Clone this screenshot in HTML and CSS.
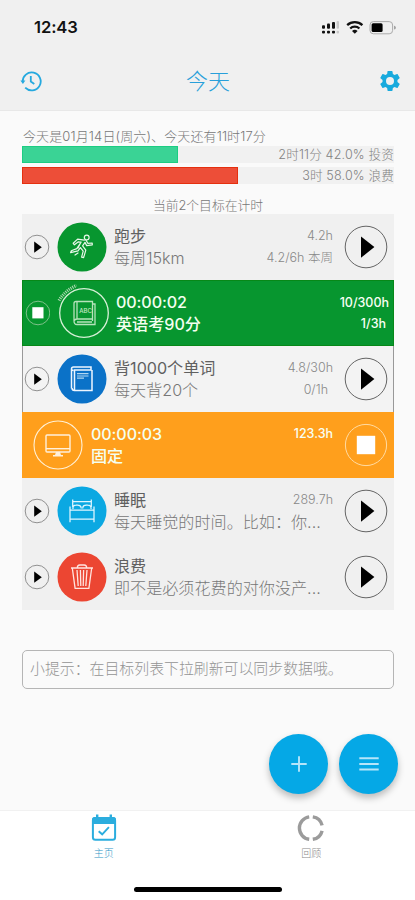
FILE: index.html
```html
<!DOCTYPE html>
<html lang="zh-CN">
<head>
<meta charset="utf-8">
<title>今天</title>
<link rel="stylesheet" href="styles.css">
</head>
<body>
<svg class="defs" width="0" height="0">
  <symbol id="play-small" viewBox="0 0 26 26"><circle cx="13" cy="13" r="11.8" fill="none" stroke="#777" stroke-width=".8"/><path d="M10.2 7.6v11.2l7.6-5.6z"/></symbol>
  <symbol id="play" viewBox="0 0 44 44"><circle cx="22" cy="22" r="20.8" fill="none" stroke="#555" stroke-width=".9"/><path d="M17 11.4v21.4L30.4 22z"/></symbol>
</svg>
<div class="screen">
  <header class="top">
    <div class="status">
      <span class="clock">12:43</span>
      <svg class="sysicons" width="76" height="18" viewBox="0 0 76 18">
        <g fill="#111"><rect x="1" y="7.2" width="3" height="3.6" rx="1"/><rect x="6" y="5.6" width="3" height="5.2" rx="1"/><rect x="11" y="4" width="3" height="6.8" rx="1"/><rect x="1" y="12.8" width="3" height="2.8" rx="1"/><rect x="6" y="12.8" width="3" height="2.8" rx="1"/><rect x="11" y="12.8" width="3" height="2.8" rx="1"/></g>
        <g fill="#c8c8c8"><rect x="15.6" y="3" width="2.4" height="7.8" rx="1"/><rect x="15.6" y="12.8" width="2.4" height="2.8" rx="1"/></g>
        <path d="M26.2 7.2a11.1 11.1 0 0 1 15.2 0M29.2 10.5a6.8 6.8 0 0 1 9.2 0" fill="none" stroke="#111" stroke-width="2.3"/><path d="M31 12.9a4.2 4.2 0 0 1 5.6 0l-2.8 2.9z" fill="#111"/>
        <rect x="49" y="3.6" width="22.6" height="12.2" rx="3.4" fill="none" stroke="#aaa" stroke-width="1"/><path d="M73.1 7.7c2.3.4 2.3 3.4 0 3.9z" fill="#999"/><rect x="50.6" y="5.3" width="11" height="8.8" rx="1.5"/>
      </svg>
    </div>
    <div class="titlebar">
      <svg width="22" height="22" viewBox="0 0 22 22" fill="none" stroke="#25a9df" stroke-width="1.8"><path d="M2.7 12A9 9 0 1 1 5.2 17.7"/><path d="M10.8 6v5.6l3.5 2.3"/><path d="M.4 10.6h5L2.9 14z" fill="#25a9df" stroke="none"/></svg>
      <h1>今天</h1>
      <svg width="24" height="24" viewBox="0 0 24 24" fill="#18aadd"><path d="M19.43 12.98c.04-.32.07-.64.07-.98s-.03-.66-.07-.98l2.11-1.65c.19-.15.24-.42.12-.64l-2-3.46c-.12-.22-.39-.3-.61-.22l-2.49 1c-.52-.4-1.08-.73-1.69-.98l-.38-2.65A.49.49 0 0 0 14 2h-4c-.25 0-.46.18-.49.42l-.38 2.65c-.61.25-1.17.59-1.69.98l-2.49-1c-.23-.09-.49 0-.61.22l-2 3.46c-.13.22-.07.49.12.64l2.11 1.65c-.04.32-.07.65-.07.98s.03.66.07.98l-2.11 1.65c-.19.15-.24.42-.12.64l2 3.46c.12.22.39.3.61.22l2.49-1c.52.4 1.08.73 1.69.98l.38 2.65c.03.24.24.42.49.42h4c.25 0 .46-.18.49-.42l.38-2.65c.61-.25 1.17-.59 1.69-.98l2.49 1c.23.09.49 0 .61-.22l2-3.46c.12-.22.07-.49-.12-.64zM12 16a4 4 0 1 1 0-8 4 4 0 0 1 0 8z"/></svg>
    </div>
  </header>

  <main>
    <p class="date">今天是01月14日(周六)、今天还有11时17分</p>
    <div class="bar"><div class="fill invest" style="width:42%"></div><span>2时11分 42.0% 投资</span></div>
    <div class="bar"><div class="fill waste" style="width:58%"></div><span>3时 58.0% 浪费</span></div>
    <p class="count">当前2个目标在计时</p>

    <section class="goals">
      <div class="row">
        <svg class="mini" viewBox="0 0 26 26"><use href="#play-small"/></svg>
        <svg class="icon" viewBox="0 0 50 50"><circle cx="25" cy="25" r="24.5" fill="#07962f"/><g fill="none" stroke="#e9f7e9" stroke-width="1.2" stroke-linejoin="round" stroke-linecap="round"><circle cx="29.7" cy="15.6" r="2.4"/><path d="M27.3 18.2l-6.7-1.1-4.4 4.2 1.2 1.5 4-3 2.6.6-4.2 6.2-5.5 2.1-.7 2 7.4-1.8 2.4-3.3 2.8 3.5-1.6 6.1 2 .5 2.2-7.5-3.2-4.4 2.4-3.4 1.7 3.2 5.6-.8-.1-1.8-4.4.3-2-3.4M24 20l-3 6M18 33l3-2"/></g></svg>
        <div class="info"><b>跑步</b><i>每周15km</i></div>
        <div class="vals"><span>4.2h</span><span>4.2/6h 本周</span></div>
        <svg class="action" viewBox="0 0 44 44"><use href="#play"/></svg>
      </div>
      <div class="row running green">
        <svg class="mini" viewBox="0 0 26 26"><circle cx="14" cy="13" r="11.8" fill="none" stroke="#9ccc9f" stroke-width=".8"/><rect x="8.3" y="7.2" width="11.2" height="11.2" fill="#fff"/></svg>
        <svg class="icon ring" viewBox="0 0 50 50"><circle cx="25" cy="25" r="24.3" fill="none" stroke="#d7f0d7" stroke-width="1.3"/><path d="M0 12.5Q6 2.5 17.5-2.5" fill="none" stroke="#a9d8ad" stroke-width="3.2" stroke-dasharray="1.1 1"/><g fill="none" stroke="#b6e3bb" stroke-width="1.3"><path d="M15 33V15.5q0-2 2-2h16.5V33M15 33q0 3.5 3 3.5h18V16h-2.5M15 33q1-2 3-2h15.5M18 14v17M18 34h15"/></g><text x="20.2" y="24.5" class="abc">ABC</text></svg>
        <div class="info"><b>00:00:02</b><i>英语考90分</i></div>
        <div class="vals"><span>10/300h</span><span>1/3h</span></div>
      </div>
      <div class="row bordered">
        <svg class="mini" viewBox="0 0 26 26"><use href="#play-small"/></svg>
        <svg class="icon" viewBox="0 0 50 50"><circle cx="25" cy="25" r="24.5" fill="#0b72c8"/><g fill="none" stroke="#eef6ff" stroke-width="1.5"><path d="M14.5 34.5V15q0-2 2-2H34v3H17.5v20.5H35V16M15 34q0 2.5 2.5 2.5M14.5 15q0 1.5 2 1.5"/></g><path d="M20 19.7h11.5M20 22h11.5M20 24.2h7" stroke="#b3d7f1" stroke-width="1.2"/></svg>
        <div class="info"><b>背1000个单词</b><i>每天背20个</i></div>
        <div class="vals"><span>4.8/30h</span><span class="inset">0/1h</span></div>
        <svg class="action" viewBox="0 0 44 44"><use href="#play"/></svg>
      </div>
      <div class="row running orange">
        <svg class="icon" viewBox="0 0 50 50"><circle cx="25" cy="25" r="24" fill="none" stroke="#fff0d5" stroke-width="1.1"/><g fill="none" stroke="#fff0db" stroke-width="1.4"><rect x="13" y="15" width="24" height="17" rx="1"/><path d="M13 28.7h24"/></g><path d="M23 32h4l1 3h2v1.5H20V35h2z" fill="#fff0db"/></svg>
        <div class="info"><b>00:00:03</b><i>固定</i></div>
        <div class="vals top-only"><span>123.3h</span></div>
        <svg class="action" viewBox="0 0 44 44"><circle cx="22" cy="22" r="20.6" fill="none" stroke="#ffdba2" stroke-width="1"/><rect x="12.8" y="12.8" width="18.4" height="18.4" fill="#fff"/></svg>
      </div>
      <div class="row">
        <svg class="mini" viewBox="0 0 26 26"><use href="#play-small"/></svg>
        <svg class="icon" viewBox="0 0 50 50"><circle cx="25" cy="25" r="24.5" fill="#0ba8e2"/><g fill="none" stroke="#e1f6ff" stroke-width="1.25"><path d="M15.7 21v-7.5M34.3 21v-7.5M15.7 15.5h18.6M13 20.5v15.7M37 20.5v15.7M13 24h24M13 33.2h24M16 23q-.5-3.8 3-3.8 5-.8 5.3 3.3M25.7 22.5q0-4.1 5-3.3 3.8 0 3.3 3.8"/></g></svg>
        <div class="info"><b>睡眠</b><i>每天睡觉的时间。比如：你...</i></div>
        <div class="vals top-only"><span>289.7h</span></div>
        <svg class="action" viewBox="0 0 44 44"><use href="#play"/></svg>
      </div>
      <div class="row">
        <svg class="mini" viewBox="0 0 26 26"><use href="#play-small"/></svg>
        <svg class="icon" viewBox="0 0 50 50"><circle cx="25" cy="25" r="24.5" fill="#ec4632"/><g fill="none" stroke="#ffe4df" stroke-width="1.3" stroke-linejoin="round"><path d="M14 16h22M15.3 16l2.8 20.3h13.8L34.7 16M20.3 16q0-3 2.5-3h4.4q2.5 0 2.5 3M20 18l1.2 16M23.4 18l.4 16M26.6 18l-.4 16M30 18l-1.2 16"/></g></svg>
        <div class="info"><b>浪费</b><i>即不是必须花费的对你没产...</i></div>
        <div class="vals"></div>
        <svg class="action" viewBox="0 0 44 44"><use href="#play"/></svg>
      </div>
    </section>

    <div class="tip">小提示：在目标列表下拉刷新可以同步数据哦。</div>

    <div class="fabs">
      <button class="fab" aria-label="添加"><svg width="24" height="24" viewBox="0 0 24 24"><path d="M12 4.3v15.4M4.3 12h15.4" stroke="#b5e5fa" stroke-width="1.9"/></svg></button>
      <button class="fab" aria-label="菜单"><svg width="24" height="24" viewBox="0 0 24 24"><path d="M2.3 6.3h19.4M2.3 12h19.4M2.3 17.4h19.4" stroke="#b5e5fa" stroke-width="2"/></svg></button>
    </div>
  </main>

  <nav>
    <a class="tab active"><svg width="26" height="28" viewBox="0 0 26 28"><rect x="1.9" y="4" width="22.2" height="21.8" rx="2.5" fill="none" stroke="#2badde" stroke-width="2"/><path d="M1 10V5.5Q1 3 3.5 3H5V.5h2.4V3h11.2V.5H21V3h1.5Q25 3 25 5.5V10z" fill="#2badde"/><path d="M7.7 17.2l3.5 3.1 6.7-7.2" fill="none" stroke="#2badde" stroke-width="1.9"/></svg><span>主页</span></a>
    <a class="tab"><svg width="28" height="28" viewBox="0 0 28 28" fill="none" stroke="#9b9b9b" stroke-width="3.4"><path d="M12.2 2.9A11.3 11.3 0 0 0 12.2 25.3"/><path d="M15.8 2.9A11.3 11.3 0 0 1 25.1 11.4"/><path d="M25.1 16.8A11.3 11.3 0 0 1 15.8 25.3"/></svg><span>回顾</span></a>
  </nav>
  <div class="home"></div>
</div>
</body>
</html>
```

FILE: styles.css
```css
* { box-sizing: border-box; }
body { margin: 0; font-family: Inter, "Noto Sans CJK SC", sans-serif; background: #fafafa; }
p, h1 { margin: 0; }
.defs { display: block; }
.screen { width: 415px; height: 900px; display: flex; flex-direction: column; overflow: hidden; background: #fafafa; }
.top { height: 111px; flex: none; background: #f0f0f0; border-bottom: 1px solid #e8e8e8; }
.status { height: 54px; padding: 0 18px 0 34px; display: flex; align-items: center; justify-content: space-between; }
.clock { font-size: 16.6px; font-weight: 600; color: #111; letter-spacing: -.1px; }
.titlebar { height: 53px; padding: 0 13px 0 20px; display: flex; align-items: center; justify-content: space-between; }
h1 { font-size: 22px; line-height: 30px; font-weight: 300; color: #289fda; margin-right: 4px; }

main { flex: 1; padding: 16px 21px 0 22px; display: flex; flex-direction: column; }
.date { height: 19px; line-height: 19px; padding-left: 1px; font-size: 13px; font-weight: 300; color: #777; letter-spacing: .12px; white-space: nowrap; }
.bar { height: 17px; margin-bottom: 4px; background: #f1f1f1; display: flex; align-items: center; justify-content: space-between; font-size: 12.6px; line-height: 17px; font-weight: 300; color: #818181; letter-spacing: .15px; }
.fill { height: 17px; }
.invest { background: #3ad395; border: 1px solid #1ccd82; }
.waste { background: #ed4e38; border: 1px solid #e5300f; }
.count { height: 26px; line-height: 35px; text-align: center; font-size: 12.8px; font-weight: 300; color: #777; }

.goals { display: flex; flex-direction: column; }
.row { height: 66px; background: #f0f0f0; display: flex; align-items: center; padding-right: 6px; padding-left: 2px; }
.mini { width: 26px; height: 26px; flex: none; }
.icon { width: 50px; height: 50px; flex: none; margin: 0 7px; overflow: visible; }
.info { display: flex; flex-direction: column; flex: 1 0 auto; white-space: nowrap; font-size: 16.1px; line-height: 22.5px; }
.info b { font-weight: 400; color: #606060; }
.info i { font-style: normal; font-weight: 300; color: #777; }
.vals { width: 0; flex: none; display: flex; flex-direction: column; align-items: flex-end; font-size: 12.5px; line-height: 22.5px; font-weight: 300; color: #888; white-space: nowrap; margin-right: 11px; }
.action { width: 44px; height: 44px; flex: none; }
.top-only { height: 45px; }
.inset { padding-right: 5px; }
.running .info b, .running .info i { color: #f4fff0; font-weight: 500; }
.running .info { line-height: 22px; }
.running .vals { color: #f8fff4; font-weight: 500; line-height: 21.5px; }
.running .info b { letter-spacing: -.1px; }
.green { background: #07962f; border: 1px solid #078818; padding: 0 4px 0 1px; }
.green .icon { margin: 0 7px 0 9px; }
.green .vals { margin-right: 0; }
.green .vals span:last-child { padding-right: 3px; }
.bordered { border-left: 1px solid #999; border-right: 1px solid #999; padding: 0 5px 0 1px; background: #f3f3f3; }
.orange { background: #ff9f1c; padding-left: 11px; }
.orange .icon { margin: 0 8px 0 0; }
.abc { font-size: 6px; font-weight: 500; fill: #c7eac9; }

.tip { margin-top: 40px; height: 39px; flex: none; border: 1px solid #b5b5b5; border-radius: 5px; padding-left: 7px; line-height: 37px; font-size: 14.9px; font-weight: 300; color: #949494; white-space: nowrap; }
.fabs { display: flex; justify-content: flex-end; gap: 11px; margin: 45px -4px 0 0; }
.fab { width: 59px; height: 60px; padding: 0; border: 0; border-radius: 50%; background: #05a8e6; display: flex; align-items: center; justify-content: center; box-shadow: 0 4px 7px rgba(0,0,0,.25); }

nav { height: 69px; flex: none; background: #fff; border-top: 1px solid #f1f1f1; display: grid; grid-template-columns: 1fr 1fr; }
.tab { display: flex; flex-direction: column; align-items: center; padding-top: 3px; font-size: 10px; line-height: 22px; font-weight: 300; color: #888; }
.active { color: #3295c6; }
.home { height: 21px; flex: none; background: #fff; display: flex; justify-content: center; padding-top: 8px; }
.home::before { content: ""; width: 148px; height: 5px; border-radius: 3px; background: #000; }
```
